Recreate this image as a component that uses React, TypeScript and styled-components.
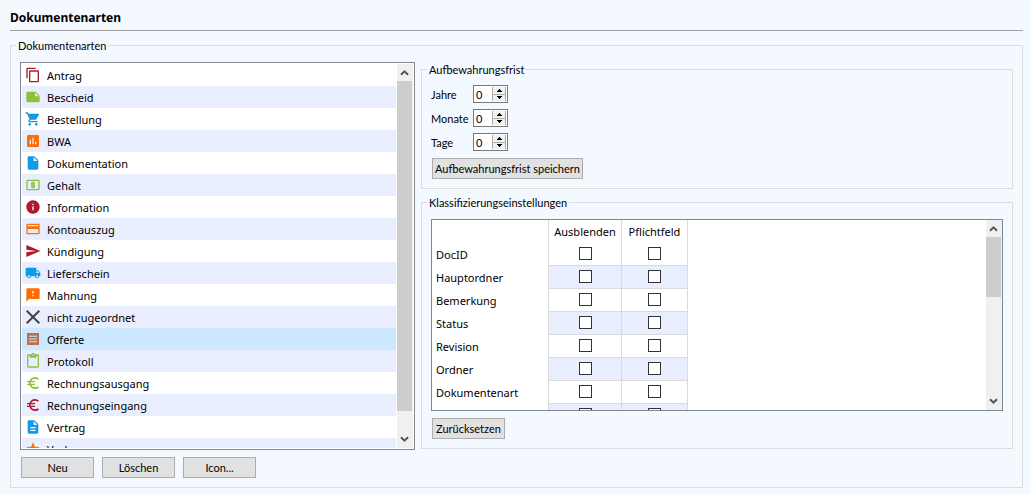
import React from 'react';
import styled, { createGlobalStyle, css } from 'styled-components';
import {
  MdContentCopy,
  MdNote,
  MdShoppingCart,
  MdInsertChart,
  MdInsertDriveFile,
  MdLocalAtm,
  MdInfo,
  MdCreditCard,
  MdSend,
  MdLocalShipping,
  MdFeedback,
  MdClose,
  MdContentPaste,
  MdEuroSymbol,
  MdDescription,
  MdStar,
} from 'react-icons/md';

const RED = '#b0182d';
const GREEN = '#8fc03a';
const BLUE = '#0d9bea';
const ORANGE = '#ff6d00';
const BROWN = '#b8714d';
const DARK = '#404447';

const GlobalStyle = createGlobalStyle`
  *, *::before, *::after { box-sizing: border-box; }
  html { background: #f4f9ff; }
  body { margin: 0; color: #000; font: 12px/16px 'Noto Sans', 'Open Sans', sans-serif; }
`;

const Page = styled.main`
  padding: 10px 8px 6px 10px;
`;

const Title = styled.h1`
  margin: 0 0 7px;
  padding-bottom: 4px;
  border-bottom: 1px solid #a0a0a0;
  font-size: 12px;
  line-height: 16px;
  font-weight: 700;
`;

const Group = styled.fieldset<{ $top?: number }>`
  min-width: 0;
  margin: 0;
  padding: ${({ $top = 9 }) => $top}px 9px 9px;
  border: 1px solid #dcdcdc;
`;

const dialogFont = css`
  font-family: Lato, 'Liberation Sans', sans-serif;
  font-size: 11px;
  line-height: 14px;
`;

const Legend = styled.legend`
  ${dialogFont}
  margin-left: -4px;
  padding: 1px 2px 0;
`;

const Columns = styled.div`
  display: grid;
  grid-template-columns: 395px minmax(0, 1fr);
  gap: 6px;
  align-items: start;
`;

const Stack = styled.div<{ $gap: number }>`
  display: flex;
  flex-direction: column;
  gap: ${({ $gap }) => $gap}px;
`;

const ScrollBox = styled.div<{ $height: number; $inset?: number }>`
  display: flex;
  gap: ${({ $inset = 0 }) => $inset}px;
  height: ${({ $height }) => $height}px;
  padding: ${({ $inset = 0 }) => $inset}px;
  border: 1px solid #828790;
  background: #fff;
`;

const Viewport = styled.div`
  flex: 1;
  min-width: 0;
  overflow: hidden;
`;

const Bar = styled.div`
  display: flex;
  flex-direction: column;
  flex: 0 0 16px;
  background: #f0f0f0;
`;

const BarButton = styled.button`
  display: grid;
  place-items: center;
  width: 15px;
  height: 17px;
  padding: 0;
  border: 0;
  background: none;
`;

const BarTrack = styled.div`
  flex: 1;
`;

const BarThumb = styled.div<{ $length: number }>`
  width: 15px;
  height: ${({ $length }) => $length}px;
  background: #cdcdcd;
`;

const DocList = styled.ul`
  margin: 0;
  padding: 0;
  list-style: none;
`;

const DocItem = styled.li<{ $selected?: boolean }>`
  display: flex;
  align-items: center;
  gap: 6px;
  height: 22px;
  padding-left: 3px;
  font-size: 11px;

  &:nth-child(even) { background: #e9eeff; }
  ${({ $selected }) => $selected && css`&& { background: #cce8ff; }`}

  svg { flex: none; width: 16px; height: 16px; }
`;

const DocName = styled.span`
  padding-top: 2px;
`;

const ButtonRow = styled.div`
  display: flex;
  gap: 8px;
  padding-left: 1px;
`;

const PushButton = styled.button`
  ${dialogFont}
  min-width: 73px;
  height: 21px;
  padding: 1px 2px 0;
  border: 1px solid #adadad;
  background: #e1e1e1;
  color: #000;
`;

const Field = styled.div`
  ${dialogFont}
  display: grid;
  grid-template-columns: 42px 35px;
  align-items: center;
`;

const FieldLabel = styled.label`
  padding-top: 2px;
`;

const Fields = styled(Stack)`
  padding-bottom: 1px;
`;

const SpinBox = styled.div`
  display: flex;
  height: 18px;
  padding: 1px;
  border: 1px solid #7a7a7a;
  background: #fff;
`;

const SpinInput = styled.input`
  ${dialogFont}
  flex: 1;
  min-width: 0;
  padding: 1px 0 0 1px;
  border: 0;
  outline: 0;
  background: none;
  color: #000;
`;

const SpinButtons = styled.div`
  display: flex;
  flex-direction: column;
  width: 14px;
  border: solid #adadad;
  border-width: 0 1px;
`;

const SpinButton = styled.button`
  display: grid;
  place-items: center;
  flex: 1;
  padding: 0;
  border: 0;
  background: #f0f0f0;

  & + & { border-top: 1px solid #adadad; }
`;

const Table = styled.table`
  width: 256px;
  table-layout: fixed;
  border-collapse: separate;
  border-spacing: 0;
  font-size: 11px;

  th, td {
    height: 23px;
    padding: 0;
    border-right: 1px solid #dadada;
    font-weight: 400;
    text-align: center;
  }
  tbody th { padding-left: 4px; text-align: left; }
  td { padding-bottom: 2px; border-bottom: 1px solid #dadada; }
  tbody tr:nth-child(even) td { background: #e9eeff; }
`;

const Check = styled.input`
  appearance: none;
  display: block;
  width: 13px;
  height: 13px;
  margin: 0 auto;
  border: 1px solid #333;
  background: #fff;
`;

const OfferIcon = () => (
  <svg viewBox="0 0 24 24" fill={BROWN}>
    <path fillRule="evenodd" d="M3 3h18v18H3zM6 7v1.6h12V7zm0 4.2v1.6h12v-1.6zm0 4.2V17h12v-1.6z" />
  </svg>
);

const Chevron = ({ down }: { down?: boolean }) => (
  <svg width="9" height="7" viewBox="0 0 9 7" fill="none" stroke="#555" strokeWidth="2">
    <path d={down ? 'M1 1.2L4.5 4.7L8 1.2' : 'M1 5.8L4.5 2.3L8 5.8'} />
  </svg>
);

const Triangle = ({ down }: { down?: boolean }) => (
  <svg width="5" height="3" viewBox="0 0 5 3" shapeRendering="crispEdges">
    <path d={down ? 'M0 0h5v1H4v1H3v1H2V2H1V1H0z' : 'M0 3h5V2H4V1H3V0H2v1H1v1H0z'} />
  </svg>
);

const ScrollBar = ({ thumb }: { thumb: number }) => (
  <Bar>
    <BarButton type="button" aria-label="Nach oben"><Chevron /></BarButton>
    <BarTrack><BarThumb $length={thumb} /></BarTrack>
    <BarButton type="button" aria-label="Nach unten"><Chevron down /></BarButton>
  </Bar>
);

const docTypes: { name: string; icon: React.ReactNode; selected?: boolean }[] = [
  { name: 'Antrag', icon: <MdContentCopy color={RED} /> },
  { name: 'Bescheid', icon: <MdNote color={GREEN} /> },
  { name: 'Bestellung', icon: <MdShoppingCart color={BLUE} /> },
  { name: 'BWA', icon: <MdInsertChart color={ORANGE} /> },
  { name: 'Dokumentation', icon: <MdInsertDriveFile color={BLUE} /> },
  { name: 'Gehalt', icon: <MdLocalAtm color={GREEN} /> },
  { name: 'Information', icon: <MdInfo color={RED} /> },
  { name: 'Kontoauszug', icon: <MdCreditCard color={ORANGE} /> },
  { name: 'Kündigung', icon: <MdSend color={RED} /> },
  { name: 'Lieferschein', icon: <MdLocalShipping color={BLUE} /> },
  { name: 'Mahnung', icon: <MdFeedback color={ORANGE} /> },
  { name: 'nicht zugeordnet', icon: <MdClose color={DARK} viewBox="4 4 16 16" /> },
  { name: 'Offerte', icon: <OfferIcon />, selected: true },
  { name: 'Protokoll', icon: <MdContentPaste color={GREEN} /> },
  { name: 'Rechnungsausgang', icon: <MdEuroSymbol color={GREEN} /> },
  { name: 'Rechnungseingang', icon: <MdEuroSymbol color={RED} /> },
  { name: 'Vertrag', icon: <MdDescription color={BLUE} /> },
  { name: 'Vorlage', icon: <MdStar color={ORANGE} /> },
];

const periods = ['Jahre', 'Monate', 'Tage'];

const settings = ['DocID', 'Hauptordner', 'Bemerkung', 'Status', 'Revision', 'Ordner', 'Dokumentenart', 'Letzte Änderung'];

export default function App() {
  return (
    <>
      <GlobalStyle />
      <Page>
        <Title>Dokumentenarten</Title>
        <Group>
          <Legend>Dokumentenarten</Legend>
          <Columns>
            <Stack $gap={7}>
              <ScrollBox $height={388} $inset={1}>
                <Viewport>
                  <DocList>
                    {docTypes.map((doc) => (
                      <DocItem key={doc.name} $selected={doc.selected}>
                        {doc.icon}
                        <DocName>{doc.name}</DocName>
                      </DocItem>
                    ))}
                  </DocList>
                </Viewport>
                <ScrollBar thumb={330} />
              </ScrollBox>
              <ButtonRow>
                <PushButton type="button">Neu</PushButton>
                <PushButton type="button">Löschen</PushButton>
                <PushButton type="button">Icon...</PushButton>
              </ButtonRow>
            </Stack>
            <Stack $gap={6}>
              <Group $top={8}>
                <Legend>Aufbewahrungsfrist</Legend>
                <Stack $gap={6}>
                  <Fields $gap={6}>
                    {periods.map((period) => (
                      <Field key={period}>
                        <FieldLabel htmlFor={period}>{period}</FieldLabel>
                        <SpinBox>
                          <SpinInput id={period} type="text" inputMode="numeric" defaultValue="0" />
                          <SpinButtons>
                            <SpinButton type="button" aria-label={`${period} erhöhen`}><Triangle /></SpinButton>
                            <SpinButton type="button" aria-label={`${period} verringern`}><Triangle down /></SpinButton>
                          </SpinButtons>
                        </SpinBox>
                      </Field>
                    ))}
                  </Fields>
                  <ButtonRow>
                    <PushButton type="button">Aufbewahrungsfrist speichern</PushButton>
                  </ButtonRow>
                </Stack>
              </Group>
              <Group>
                <Legend>Klassifizierungseinstellungen</Legend>
                <Stack $gap={7}>
                  <ScrollBox $height={192}>
                    <Viewport>
                      <Table>
                        <colgroup>
                          <col width="117" />
                          <col width="73" />
                          <col width="66" />
                        </colgroup>
                        <thead>
                          <tr>
                            <th />
                            <th scope="col">Ausblenden</th>
                            <th scope="col">Pflichtfeld</th>
                          </tr>
                        </thead>
                        <tbody>
                          {settings.map((name) => (
                            <tr key={name}>
                              <th scope="row">{name}</th>
                              <td><Check type="checkbox" aria-label={`${name} ausblenden`} /></td>
                              <td><Check type="checkbox" aria-label={`${name} Pflichtfeld`} /></td>
                            </tr>
                          ))}
                        </tbody>
                      </Table>
                    </Viewport>
                    <ScrollBar thumb={60} />
                  </ScrollBox>
                  <ButtonRow>
                    <PushButton type="button">Zurücksetzen</PushButton>
                  </ButtonRow>
                </Stack>
              </Group>
            </Stack>
          </Columns>
        </Group>
      </Page>
    </>
  );
}
